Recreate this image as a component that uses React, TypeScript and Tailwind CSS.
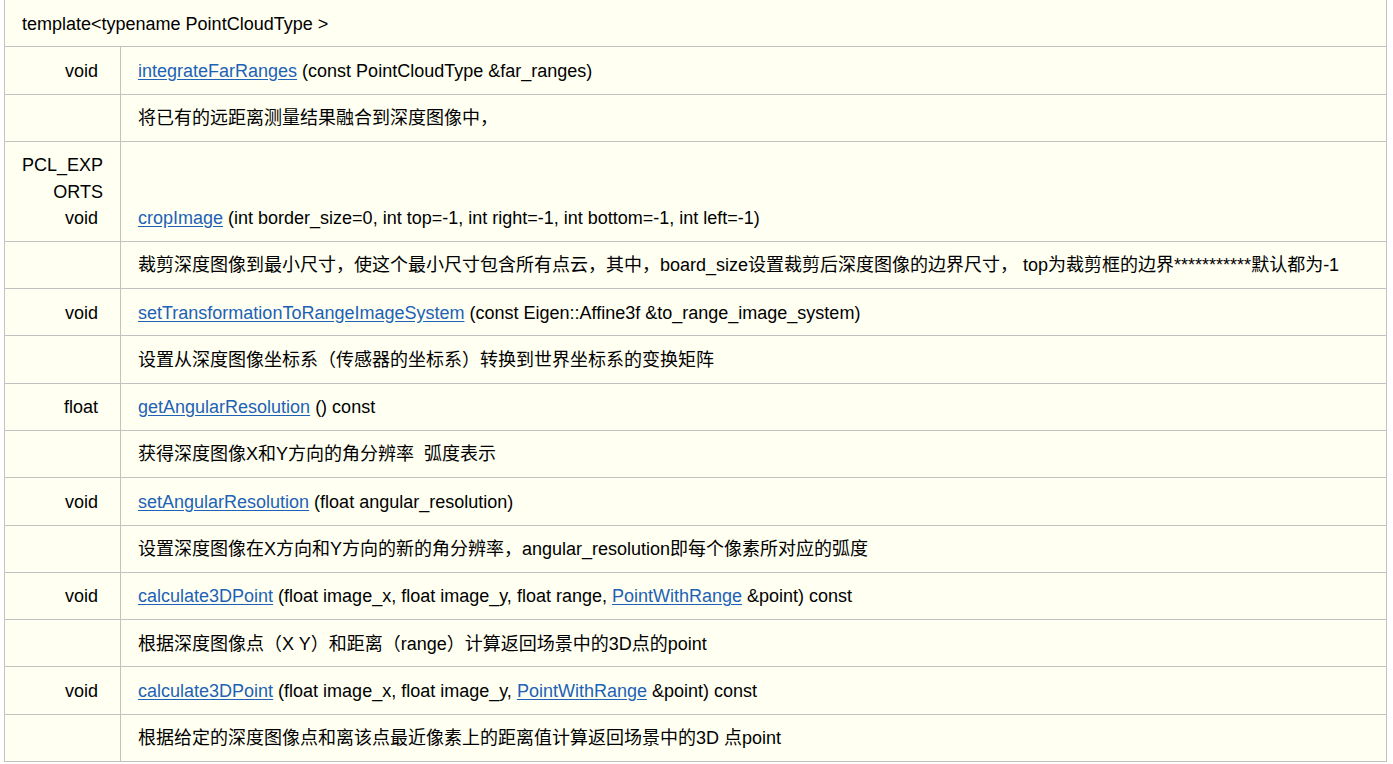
import React from "react";

type Part = string | { link: string };

type Row =
  | { kind: "decl"; left: string[]; right: Part[] }
  | { kind: "desc"; text: string };

const L = (s: string): Part => ({ link: s });

const rows: Row[] = [
  { kind: "decl", left: ["void\u00a0"], right: [L("integrateFarRanges"), " (const PointCloudType &far_ranges)"] },
  { kind: "desc", text: "将已有的远距离测量结果融合到深度图像中，" },
  {
    kind: "decl",
    left: ["PCL_EXP", "ORTS", "void\u00a0"],
    right: [L("cropImage"), " (int border_size=0, int top=-1, int right=-1, int bottom=-1, int left=-1)"],
  },
  {
    kind: "desc",
    text: "裁剪深度图像到最小尺寸，使这个最小尺寸包含所有点云，其中，board_size设置裁剪后深度图像的边界尺寸， top为裁剪框的边界***********默认都为-1",
  },
  {
    kind: "decl",
    left: ["void\u00a0"],
    right: [L("setTransformationToRangeImageSystem"), " (const Eigen::Affine3f &to_range_image_system)"],
  },
  { kind: "desc", text: "设置从深度图像坐标系（传感器的坐标系）转换到世界坐标系的变换矩阵" },
  { kind: "decl", left: ["float\u00a0"], right: [L("getAngularResolution"), " () const"] },
  { kind: "desc", text: "获得深度图像X和Y方向的角分辨率  弧度表示" },
  { kind: "decl", left: ["void\u00a0"], right: [L("setAngularResolution"), " (float angular_resolution)"] },
  { kind: "desc", text: "设置深度图像在X方向和Y方向的新的角分辨率，angular_resolution即每个像素所对应的弧度" },
  {
    kind: "decl",
    left: ["void\u00a0"],
    right: [L("calculate3DPoint"), " (float image_x, float image_y, float range, ", L("PointWithRange"), " &point) const"],
  },
  { kind: "desc", text: "根据深度图像点（X Y）和距离（range）计算返回场景中的3D点的point" },
  {
    kind: "decl",
    left: ["void\u00a0"],
    right: [L("calculate3DPoint"), " (float image_x, float image_y, ", L("PointWithRange"), " &point) const"],
  },
  { kind: "desc", text: "根据给定的深度图像点和离该点最近像素上的距离值计算返回场景中的3D 点point" },
];

function renderParts(parts: Part[]) {
  return parts.map((p, i) =>
    typeof p === "string" ? (
      <span key={i}>{p}</span>
    ) : (
      <a key={i} href="#" className="text-[#1d62b6] underline decoration-[#1d62b6] underline-offset-[2px]">
        {p.link}
      </a>
    )
  );
}

export default function App() {
  return (
    <div
      className="min-h-[764px] w-[1393px] bg-white text-black"
      style={{ fontFamily: '"Liberation Sans", Arial, "Noto Sans CJK SC", sans-serif' }}
    >
      <div className="ml-[4px] w-[1383px] border-x border-b border-[#c2c2c2] bg-[#fffff2] text-[18px] leading-[26.3px]">
        <div className="border-b border-[#c2c2c2] px-[17px] pt-[10.5px] pb-[9.5px] whitespace-pre">
          {"template<typename PointCloudType >"}
        </div>
        {rows.map((r, i) => (
          <div key={i} className={"flex " + (i < rows.length - 1 ? "border-b border-[#c2c2c2]" : "")}>
            <div className="w-[116px] shrink-0 border-r border-[#c2c2c2] px-[17px] pt-[10.5px] pb-[9.5px] text-right whitespace-pre">
              {r.kind === "decl" ? r.left.map((s, j) => <div key={j}>{s}</div>) : "\u00a0"}
            </div>
            <div className="flex flex-1 items-end px-[17px] pt-[10.5px] pb-[9.5px] whitespace-pre">
              {r.kind === "decl" ? <div>{renderParts(r.right)}</div> : <div>{r.text}</div>}
            </div>
          </div>
        ))}
      </div>
    </div>
  );
}
